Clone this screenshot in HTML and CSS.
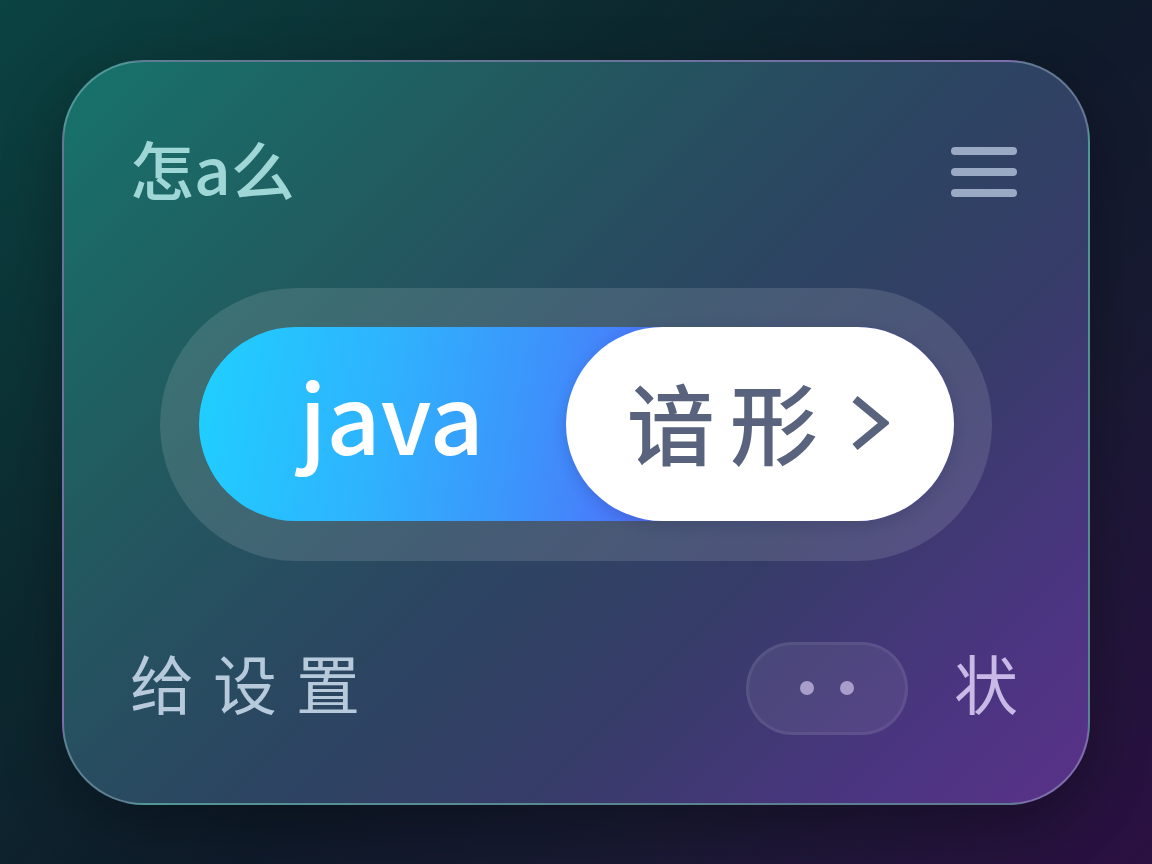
FILE: index.html
```html
<!DOCTYPE html>
<html lang="zh">
<head>
<meta charset="utf-8">
<title>Toggle card</title>
<link rel="stylesheet" href="styles.css">
</head>
<body>
  <main class="card">
    <header class="card-head">
      <h1 class="title">怎a么</h1>
      <button class="menu" aria-label="menu">
        <span class="bar"></span>
        <span class="bar"></span>
        <span class="bar"></span>
      </button>
    </header>

    <section class="switch-wrap">
      <div class="track">
        <span class="track-label">java</span>
        <div class="knob">
          <span class="knob-text">谙形</span>
          <svg class="chev" viewBox="0 0 38 56" width="38" height="56" aria-hidden="true">
            <polyline points="4,4 33,28 4,52" fill="none" stroke="currentColor" stroke-width="8" stroke-linejoin="miter" stroke-linecap="butt"/>
          </svg>
        </div>
      </div>
    </section>

    <footer class="card-foot">
      <span class="foot-label">给设置</span>
      <div class="foot-right">
        <div class="dots">
          <span class="dot"></span>
          <span class="dot"></span>
        </div>
        <span class="state">状</span>
      </div>
    </footer>
  </main>
</body>
</html>
```

FILE: styles.css
```css
* { box-sizing: border-box; }

html, body { height: 100%; }

body {
  margin: 0;
  width: 1152px;
  height: 864px;
  display: flex;
  align-items: center;
  justify-content: center;
  font-family: "Noto Sans CJK SC", "Noto Sans", sans-serif;
  background: linear-gradient(135deg, #0b4342 0%, #0c2a30 30%, #0f1a2a 55%, #181a32 72%, #2b1042 100%);
}

.card {
  width: 1028px;
  height: 745px;
  border-radius: 82px;
  border: 2px solid rgba(200, 225, 240, 0.34);
  background: linear-gradient(135deg, #17736c 0%, #22595f 28%, #2b4661 50%, #363c68 68%, #4a3580 86%, #5a3289 100%);
  box-shadow: 0 20px 60px rgba(0, 0, 0, 0.3);
  padding: 76px 70px 68px 66px;
  display: flex;
  flex-direction: column;
}

.card-head {
  height: 64px;
  display: flex;
  align-items: center;
  justify-content: space-between;
}

.title {
  margin: -6px 0 0;
  font-size: 64px;
  line-height: 64px;
  font-weight: 500;
  color: #9fd6d6;
}

.menu {
  width: 66px;
  padding: 0;
  border: 0;
  background: none;
  display: flex;
  flex-direction: column;
  gap: 13px;
  margin-top: 4px;
  margin-right: 1px;
}

.bar {
  display: block;
  height: 8px;
  border-radius: 4px;
  background: #9aaac4;
}

.switch-wrap {
  margin: 86px 0 0 30px;
  width: 832px;
  height: 273px;
  border-radius: 137px;
  background: rgba(255, 255, 255, 0.12);
  padding: 39px 38px 39px 39px;
}

.track {
  height: 194px;
  border-radius: 97px;
  background: linear-gradient(100deg, #1fd0ff 0%, #2fb2fd 25%, #3d92fb 45%, #4b78fa 58%, #6a5cf2 70%);
  display: flex;
  align-items: center;
}

.track-label {
  flex: 1;
  text-align: center;
  padding-left: 18px;
  color: #ffffff;
  font-size: 94px;
  line-height: 1;
  font-weight: 500;
  margin-top: -20px;
}

.knob {
  width: 388px;
  height: 194px;
  border-radius: 97px;
  background: #ffffff;
  box-shadow: 0 4px 14px rgba(20, 30, 80, 0.18);
  display: flex;
  align-items: center;
  justify-content: center;
  color: #59637e;
  gap: 18px;
  padding-right: 4px;
}

.knob-text {
  font-size: 88px;
  line-height: 1;
  font-weight: 500;
  letter-spacing: 15px;
  margin-top: -8px;
}

.chev {
  display: block;
  margin-top: -2px;
}

.card-foot {
  margin-top: 81px;
  height: 93px;
  display: flex;
  align-items: center;
  justify-content: space-between;
}

.foot-label {
  font-size: 64px;
  line-height: 1;
  color: #b6cadc;
  letter-spacing: 19px;
  margin-top: -14px;
}

.foot-right {
  display: flex;
  align-items: center;
  gap: 46px;
}

.dots {
  width: 162px;
  height: 93px;
  border-radius: 47px;
  border: 3px solid rgba(255, 255, 255, 0.07);
  background: rgba(255, 255, 255, 0.07);
  display: flex;
  align-items: center;
  justify-content: center;
  gap: 26px;
}

.dot {
  width: 14px;
  height: 14px;
  border-radius: 50%;
  background: #a99ecb;
}

.state {
  font-size: 64px;
  line-height: 1;
  color: #c9b9e6;
  margin-top: -14px;
}
```
